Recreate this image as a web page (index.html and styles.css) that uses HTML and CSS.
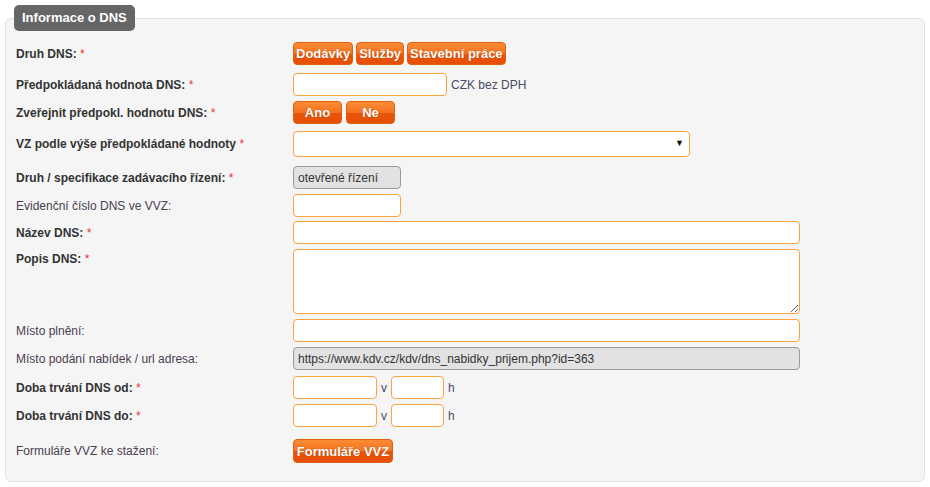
FILE: index.html
```html
<!DOCTYPE html>
<html lang="cs">
<head>
  <meta charset="UTF-8">
  <title>Informace o DNS</title>
  <link rel="stylesheet" href="styles.css">
</head>
<body>
  <div class="panel">
    <div class="panel-title">Informace o DNS</div>

    <div class="rows">
      <div class="row">
        <label class="lbl req">Druh DNS: <span class="star">*</span></label>
        <div class="ctl">
          <button class="btn">Dodávky</button>
          <button class="btn">Služby</button>
          <button class="btn">Stavební práce</button>
        </div>
      </div>

      <div class="row row-hodnota">
        <label class="lbl req" for="hodnota">Předpokládaná hodnota DNS: <span class="star">*</span></label>
        <div class="ctl">
          <input type="text" id="hodnota" class="inp w-hodnota">
          <span class="unit">CZK bez DPH</span>
        </div>
      </div>

      <div class="row">
        <label class="lbl req">Zveřejnit předpokl. hodnotu DNS: <span class="star">*</span></label>
        <div class="ctl ctl-yesno">
          <button class="btn btn-yn">Ano</button>
          <button class="btn btn-yn">Ne</button>
        </div>
      </div>

      <div class="row row-select">
        <label class="lbl req" for="vz">VZ podle výše předpokládané hodnoty <span class="star">*</span></label>
        <div class="ctl">
          <span class="select-wrap">
            <select id="vz" class="sel">
              <option></option>
            </select>
          </span>
        </div>
      </div>

      <div class="row row-druh">
        <label class="lbl req">Druh / specifikace zadávacího řízení: <span class="star">*</span></label>
        <div class="ctl">
          <input type="text" class="inp inp-ro w-short" value="otevřené řízení" readonly>
        </div>
      </div>

      <div class="row">
        <label class="lbl" for="evid">Evidenční číslo DNS ve VVZ:</label>
        <div class="ctl">
          <input type="text" id="evid" class="inp w-short">
        </div>
      </div>

      <div class="row row-nazev">
        <label class="lbl req" for="nazev">Název DNS: <span class="star">*</span></label>
        <div class="ctl">
          <input type="text" id="nazev" class="inp w-wide">
        </div>
      </div>

      <div class="row row-top">
        <label class="lbl req" for="popis">Popis DNS: <span class="star">*</span></label>
        <div class="ctl">
          <textarea id="popis" class="inp txt w-wide"></textarea>
        </div>
      </div>

      <div class="row">
        <label class="lbl" for="misto">Místo plnění:</label>
        <div class="ctl">
          <input type="text" id="misto" class="inp w-wide">
        </div>
      </div>

      <div class="row">
        <label class="lbl">Místo podání nabídek / url adresa:</label>
        <div class="ctl">
          <input type="text" class="inp inp-ro w-wide" value="https://www.kdv.cz/kdv/dns_nabidky_prijem.php?id=363" readonly>
        </div>
      </div>

      <div class="row row-od">
        <label class="lbl req">Doba trvání DNS od: <span class="star">*</span></label>
        <div class="ctl ctl-date">
          <input type="text" class="inp w-date">
          <span class="unit">v</span>
          <input type="text" class="inp w-time">
          <span class="unit">h</span>
        </div>
      </div>

      <div class="row">
        <label class="lbl req">Doba trvání DNS do: <span class="star">*</span></label>
        <div class="ctl ctl-date">
          <input type="text" class="inp w-date">
          <span class="unit">v</span>
          <input type="text" class="inp w-time">
          <span class="unit">h</span>
        </div>
      </div>

      <div class="row row-forms">
        <label class="lbl">Formuláře VVZ ke stažení:</label>
        <div class="ctl">
          <button class="btn btn-big">Formuláře VVZ</button>
        </div>
      </div>
    </div>
  </div>
</body>
</html>
```

FILE: styles.css
```css
body {
  margin: 0;
  padding: 5px;
  background-color: #ffffff;
  font-family: "Liberation Sans", Arial, sans-serif;
  font-size: 12px;
  color: #333;
}
.panel {
  margin-top: 13px;
  padding: 0 10px 18px 10px;
  background-color: #f5f5f5;
  border: 1px solid #e2e2e2;
  border-radius: 6px;
}
.panel-title {
  display: block;
  width: fit-content;
  margin: -14px 0 0 -2px;
  height: 26px;
  line-height: 26px;
  padding: 0 8px;
  background-color: #666;
  color: #fff;
  font-weight: bold;
  font-size: 13px;
  border-radius: 5px;
}
.rows {
  display: flex;
  flex-direction: column;
  gap: 5px;
  margin-top: 11px;
}
.row {
  display: flex;
  align-items: center;
}
.row-top {
  align-items: flex-start;
}
.row-top .lbl {
  padding-top: 3px;
}
.row-hodnota { margin-top: 3px; }
.row-select { margin-top: 2px; }
.row-druh { margin-top: 4px; }
.row-nazev { margin-top: -1px; }
.row-od { margin-top: 1px; }
.row-forms { margin-top: 7px; }

.lbl {
  flex: 0 0 277px;
  color: #4a4050;
}
.lbl.req {
  font-weight: bold;
  color: #333;
}
.star {
  color: #e8323c;
  font-weight: normal;
}
.ctl {
  display: flex;
  align-items: center;
  gap: 3px;
}
.ctl-yesno {
  gap: 4px;
}
.ctl-date {
  gap: 4px;
}
.unit {
  color: #4a4a66;
  margin-left: 1px;
}
.ctl-date .unit {
  margin-left: 0;
}

.btn {
  height: 23px;
  padding: 0 2px;
  font-family: "Liberation Sans", Arial, sans-serif;
  font-size: 13px;
  font-weight: bold;
  color: #fff;
  text-shadow: 0 0 1px #a83a00;
  background: linear-gradient(#fb8c35, #f4731f 50%, #e8540a 51%, #e64f06);
  border: 1px solid #e0600f;
  border-radius: 4px;
  cursor: pointer;
}
.btn-yn {
  width: 49px;
}
.btn-big {
  height: 24px;
  width: 100px;
  padding: 0;
}

.inp {
  box-sizing: border-box;
  height: 23px;
  padding: 2px 4px;
  font-family: "Liberation Sans", Arial, sans-serif;
  font-size: 12px;
  color: #333;
  background-color: #fff;
  border: 1px solid #fca23f;
  border-radius: 4px;
  outline: none;
}
.inp-ro {
  background-color: #e2e2e2;
  border-color: #9a9a9a;
}
.txt {
  height: 65px;
  display: block;
}
.w-hodnota { width: 154px; }
.w-short { width: 108px; }
.w-wide { width: 507px; }
.w-date { width: 84px; }
.w-time { width: 53px; }

.select-wrap {
  position: relative;
  display: inline-block;
}
.select-wrap::after {
  content: "▼";
  position: absolute;
  right: 6px;
  top: 7px;
  font-size: 9px;
  color: #111;
  pointer-events: none;
}
.sel {
  box-sizing: border-box;
  width: 397px;
  height: 26px;
  appearance: none;
  -webkit-appearance: none;
  background-color: #fff;
  border: 1px solid #fca23f;
  border-radius: 4px;
  font-family: "Liberation Sans", Arial, sans-serif;
  font-size: 12px;
}
```
